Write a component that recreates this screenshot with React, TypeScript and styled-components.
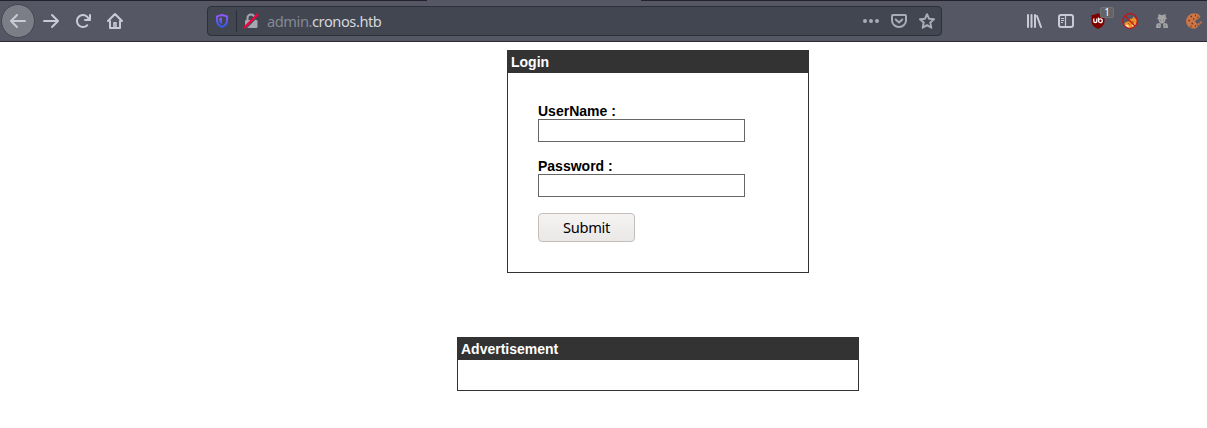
import React from "react";
import styled, { createGlobalStyle } from "styled-components";

const GlobalStyle = createGlobalStyle`
  html, body { margin: 0; padding: 0; background: #fff; overflow: hidden; }
  *, *::before, *::after { box-sizing: border-box; }
`;

const Window = styled.div`
  display: flex;
  flex-direction: column;
  width: 100%;
  height: 428px;
  overflow: hidden;
`;

const TabEdge = styled.div`
  display: flex;
  justify-content: space-between;
  height: 1px;
  background: #555864;
`;

const TabShade = styled.span<{ $width: number }>`
  width: ${(p) => p.$width}px;
  height: 1px;
  background: #23222c;
`;

const Toolbar = styled.header`
  display: flex;
  align-items: center;
  height: 41px;
  padding-left: 2px;
  background: #555864;
  border-bottom: 1px solid #2b2a33;
  color: #c9cad6;
  overflow: hidden;
`;

const ToolButton = styled.button`
  position: relative;
  display: flex;
  flex: none;
  align-items: center;
  justify-content: center;
  width: 32px;
  height: 32px;
  padding: 0;
  border: 0;
  background: none;
  color: inherit;
`;

const BackButton = styled(ToolButton)`
  width: 34px;
  height: 34px;
  margin: 0 0 0 -1px;
  border: 1px solid #44464f;
  border-radius: 50%;
  background: #7b7e87;
`;

const AddressBar = styled.div`
  display: flex;
  flex: none;
  align-items: center;
  width: 735px;
  height: 30px;
  margin: 0 76px 0 76px;
  padding: 0 0 0 6px;
  border: 1px solid #2d303a;
  border-radius: 4px;
  background: #414651;
  color: #a9acb8;
`;

const Divider = styled.span`
  width: 1px;
  height: 22px;
  margin: 0 6px;
  background: #2b2e38;
`;

const Url = styled.span`
  flex: 1;
  margin-left: 8px;
  color: #d6d8de;
  font: 14.67px/20px "Noto Sans", sans-serif;
  letter-spacing: -0.45px;
`;

const Subdomain = styled.span`
  color: #858994;
`;

const PageActions = styled.span`
  display: flex;
  gap: 12px;
  padding-right: 6px;
`;

const Badge = styled.span`
  position: absolute;
  top: 2px;
  left: 18px;
  width: 14px;
  height: 11px;
  border: 1px solid #707273;
  border-radius: 2px;
  background: #636465;
  color: #fff;
  font: 10px/9px "Noto Sans", sans-serif;
  text-align: center;
`;

const Icon = styled.svg`
  display: block;
  flex: none;
  width: 16px;
  height: 16px;
  overflow: visible;
`;

const Page = styled.main`
  display: flex;
  flex: 1;
  flex-direction: column;
  align-items: center;
  gap: 64px;
  padding: 8px 0 0 109px;
  color: #000;
  font: 14px/16px "Liberation Sans", Arial, sans-serif;
`;

const Panel = styled.section<{ $width: number }>`
  width: ${(p) => p.$width}px;
  border: 1px solid #333;
`;

const PanelTitle = styled.h2`
  height: 22px;
  margin: 0;
  padding: 3px;
  background: #333;
  color: #fff;
  font-size: 14px;
  font-weight: bold;
  line-height: 16px;
`;

const LoginForm = styled.form`
  display: flex;
  flex-direction: column;
  align-items: flex-start;
  padding: 30px;
`;

const Field = styled.label`
  display: flex;
  flex-direction: column;
  margin-bottom: 16px;
  font-weight: bold;
`;

const TextInput = styled.input`
  width: 207px;
  height: 23px;
  padding: 1px 2px;
  border: 1px solid #666;
  border-radius: 0;
  background: #fff;
  outline: none;
`;

const Submit = styled.button`
  width: 97px;
  height: 29px;
  padding: 0 0 2px;
  border: 1px solid #c4bebb;
  border-radius: 4px;
  background: linear-gradient(#f5f4f3, #eae8e7);
  color: #000;
  font: 14.67px/20px "Noto Sans", sans-serif;
  letter-spacing: -0.35px;
`;

const AdBody = styled.div`
  height: 30px;
`;

const BackIcon = () => (
  <Icon viewBox="0 0 16 16" fill="currentColor">
    <path d="M15 7H3.414l4.293-4.293a1 1 0 0 0-1.414-1.414l-6 6a1 1 0 0 0 0 1.414l6 6a1 1 0 0 0 1.414-1.414L3.414 9H15a1 1 0 0 0 0-2z" />
  </Icon>
);

const ForwardIcon = () => (
  <Icon viewBox="0 0 16 16" fill="currentColor">
    <path d="M1 7h11.586L8.293 2.707a1 1 0 0 1 1.414-1.414l6 6a1 1 0 0 1 0 1.414l-6 6a1 1 0 0 1-1.414-1.414L12.586 9H1a1 1 0 0 1 0-2z" />
  </Icon>
);

const ReloadIcon = () => (
  <Icon viewBox="0 0 16 16" fill="currentColor">
    <path d="M15 1a1 1 0 0 0-1 1v2.418A6.995 6.995 0 1 0 8 15a6.954 6.954 0 0 0 4.95-2.05 1 1 0 0 0-1.414-1.414A5.019 5.019 0 1 1 12.549 6H10a1 1 0 0 0 0 2h5a1 1 0 0 0 1-1V2a1 1 0 0 0-1-1z" />
  </Icon>
);

const HomeIcon = () => (
  <Icon viewBox="0 0 16 16" fill="none" stroke="currentColor" strokeWidth="2" strokeLinecap="round" strokeLinejoin="round">
    <path d="M1 8l7-7 7 7M3 8v7h10V8" />
    <path d="M7 14.5V9.7h2v4.8" strokeWidth="1.6" />
  </Icon>
);

const ShieldIcon = () => (
  <Icon viewBox="0 0 16 16">
    <defs>
      <linearGradient id="shield" x1="0" y1="0" x2="0" y2="1">
        <stop offset="0" stopColor="#9059ff" />
        <stop offset="1" stopColor="#3458e8" />
      </linearGradient>
    </defs>
    <path d="M8 2L13 3.4V7c0 3.6-1.7 5.7-5 7-3.3-1.3-5-3.4-5-7V3.4z" fill="none" stroke="url(#shield)" strokeWidth="2" strokeLinejoin="round" />
    <path d="M8 4.5v7C6 10.3 5.2 9 5.2 7V5.2z" fill="url(#shield)" />
  </Icon>
);

const InsecureIcon = () => (
  <Icon viewBox="0 0 16 16">
    <path d="M4.5 8V5a3.5 3.5 0 0 1 7 0v3" fill="none" stroke="#a4a7b0" strokeWidth="2" />
    <rect x="2" y="7" width="12.5" height="8" rx="1.2" fill="#a4a7b0" />
    <path d="M2.7 15.5L15.7 2.5" stroke="#414651" strokeWidth="1.2" />
    <path d="M1.6 14.4L14.4 1.6" stroke="#f5003d" strokeWidth="2.2" strokeLinecap="round" />
  </Icon>
);

const DotsIcon = () => (
  <Icon viewBox="0 0 16 16" fill="currentColor">
    <circle cx="2" cy="8" r="2" />
    <circle cx="8" cy="8" r="2" />
    <circle cx="14" cy="8" r="2" />
  </Icon>
);

const PocketIcon = () => (
  <Icon viewBox="0 0 16 16" fill="none" stroke="currentColor" strokeWidth="2" strokeLinecap="round" strokeLinejoin="round">
    <path d="M2 2h12a1 1 0 0 1 1 1v4.5a7 6.5 0 0 1-14 0V3a1 1 0 0 1 1-1z" />
    <path d="M4.7 6.5L8 9.5l3.3-3" />
  </Icon>
);

const StarIcon = () => (
  <Icon viewBox="0 0 16 16" fill="none" stroke="currentColor" strokeWidth="2" strokeLinejoin="round">
    <path d="M8 1.2l2 4.5 5 .5-3.7 3.4 1 5.1L8 12.2l-4.3 2.5 1-5.1L1 6.2l5-.5z" />
  </Icon>
);

const LibraryIcon = () => (
  <Icon viewBox="0 0 16 16" stroke="currentColor" strokeWidth="2" strokeLinecap="round">
    <path d="M2 2v12M5.5 2v12M9 2v12M11 3l4 11" />
  </Icon>
);

const SidebarIcon = () => (
  <Icon viewBox="0 0 16 16" fill="none" stroke="currentColor">
    <rect x="1" y="2" width="14" height="12" rx="2" strokeWidth="2" />
    <path d="M7.5 2v12" strokeWidth="1.2" />
    <path d="M3 5.5h3M3 7.5h3M3 9.5h2" />
  </Icon>
);

const BlockerIcon = () => (
  <Icon viewBox="0 0 16 16">
    <path d="M8 0c2 1.500 4 2 6.500 2v6c0 4-2.500 6-6.500 8-4-2-6.500-4-6.500-8V2C4 2 6 1.500 8 0z" fill="#800000" />
    <path d="M3.800 5.500v2.700q0 1.300 1.500 1.300T6.800 8.200V5.500" fill="none" stroke="#fff" strokeWidth="1.300" />
    <path d="M8.500 4.500v3.200" stroke="#fff" strokeWidth="1.200" />
    <circle cx="10.400" cy="7.700" r="1.900" fill="none" stroke="#fff" strokeWidth="1.300" />
  </Icon>
);

const ProxyIcon = () => (
  <Icon viewBox="0 0 16 16">
    <path d="M2 11l2-2 2.500-.5L8 6l2.500-.5 1-2 1.500 2 2 .5v4l-1.500 3.500L10 15H6l-3-2z" fill="#ef9224" />
    <path d="M3 12.500l2-1 1.500 1L8 15H6zM10 12l2.500-1.500 1 1.500-2.500 2z" fill="#ffe6bb" />
    <path d="M6.500 10.500l1 .7M10.500 8.500l1 .7" stroke="#5a3518" />
    <circle cx="8" cy="8" r="7.300" fill="none" stroke="#c41418" strokeWidth="1.300" />
    <path d="M3 3l10 10" stroke="#c41418" strokeWidth="1.400" />
  </Icon>
);

const AgentIcon = () => (
  <Icon viewBox="0 0 16 16" fill="#a3a3a3">
    <path d="M4.500 1L6.500 1.800 8 2.200l1.500-.4 2-.8.300 3.500 1.200.5-1 1.300H4L3 5l1.200-.5z" />
    <path d="M4.500 6h7L11 8.500 9.500 10.500h-3L5 8.500z" />
    <path d="M3 10.500l3-.5 1 1.700L6.500 15H2l.3-3zM13 10.500l-3-.5-1 1.700.5 3.300H14l-.3-3z" />
    <path d="M4 12.700h1.500M10.500 12.700H12M6 7.200h1M9 7.200h1" stroke="#777980" />
  </Icon>
);

const CookieIcon = () => (
  <Icon viewBox="0 0 16 16">
    <path d="M9 .3l3 .7L14.500 3.500 13 5.500 10 7 9 8.500l1.500 1.500 1.500 3.500-2.500 2H6L2.500 13.800.2 10.500v-4L2 3 5 .8z" fill="#cb7448" />
    <path d="M11.500 10.300h2.200v2h-2.200zM13.700 8.500h2v2h-2z" fill="#cb7448" />
    <path d="M4.500 3.500H6M9 2.500h1M2.500 7.500H4M5.500 10.500H7M4.500 13.500h1M9 13h1M7 6h1.200M11.500 4.500h1" stroke="#683522" strokeWidth="1.300" />
  </Icon>
);

export default function App() {
  return (
    <Window>
      <GlobalStyle />
      <TabEdge>
        <TabShade $width={427} />
        <TabShade $width={566} />
      </TabEdge>
      <Toolbar>
        <BackButton aria-label="Back"><BackIcon /></BackButton>
        <ToolButton aria-label="Forward"><ForwardIcon /></ToolButton>
        <ToolButton aria-label="Reload"><ReloadIcon /></ToolButton>
        <ToolButton aria-label="Home"><HomeIcon /></ToolButton>
        <AddressBar>
          <ShieldIcon />
          <Divider />
          <InsecureIcon />
          <Url><Subdomain>admin.</Subdomain>cronos.htb</Url>
          <PageActions>
            <DotsIcon />
            <PocketIcon />
            <StarIcon />
          </PageActions>
        </AddressBar>
        <ToolButton aria-label="Library"><LibraryIcon /></ToolButton>
        <ToolButton aria-label="Sidebars"><SidebarIcon /></ToolButton>
        <ToolButton aria-label="Content blocker"><BlockerIcon /><Badge>1</Badge></ToolButton>
        <ToolButton aria-label="Proxy"><ProxyIcon /></ToolButton>
        <ToolButton aria-label="User agent"><AgentIcon /></ToolButton>
        <ToolButton aria-label="Cookies"><CookieIcon /></ToolButton>
      </Toolbar>
      <Page>
        <Panel $width={302}>
          <PanelTitle>Login</PanelTitle>
          <LoginForm>
            <Field>UserName :<TextInput type="text" /></Field>
            <Field>Password :<TextInput type="password" /></Field>
            <Submit type="button">Submit</Submit>
          </LoginForm>
        </Panel>
        <Panel $width={402}>
          <PanelTitle>Advertisement</PanelTitle>
          <AdBody />
        </Panel>
      </Page>
    </Window>
  );
}
